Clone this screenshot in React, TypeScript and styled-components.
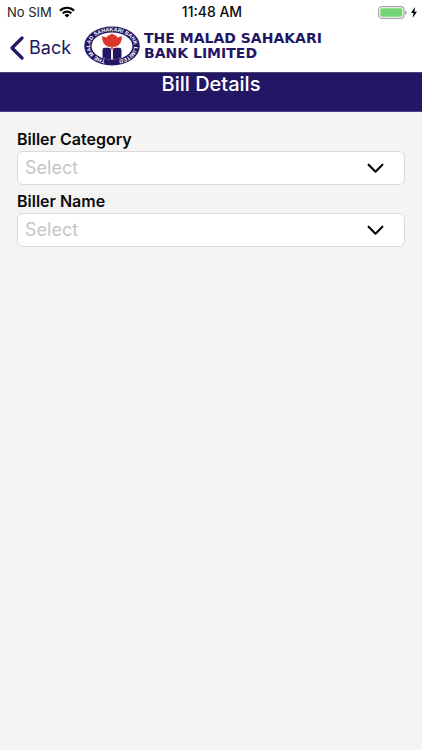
import React, { useId, useState } from "react";
import styled, { createGlobalStyle } from "styled-components";

const navy = "#231765";

const GlobalStyle = createGlobalStyle`
  * { box-sizing: border-box; }
  body {
    margin: 0;
    background: #f4f4f4;
    color: #0b0b0b;
    font-family: Inter, "Liberation Sans", sans-serif;
  }
`;

const Page = styled.div`
  min-height: 100vh;
  background: #f4f4f4;
`;

const Top = styled.header`
  background: #ffffff;
`;

const StatusBar = styled.div`
  display: grid;
  grid-template-columns: 1fr auto 1fr;
  align-items: center;
  height: 24px;
  padding: 0 5px 0 7px;
  font-size: 13px;
  line-height: 24px;
`;

const Carrier = styled.div`
  display: flex;
  align-items: center;
  gap: 7px;
  color: #222222;
`;

const Clock = styled.time`
  font-size: 14px;
  font-weight: 500;
`;

const Power = styled.div`
  display: flex;
  align-items: center;
  justify-content: flex-end;
  gap: 4px;
`;

const NavBar = styled.nav`
  display: flex;
  align-items: center;
  height: 48px;
  padding: 0 9px;
`;

const BackButton = styled.button`
  display: flex;
  align-items: center;
  gap: 5px;
  padding: 0;
  border: 0;
  background: none;
  color: ${navy};
  font: inherit;
  font-size: 18px;
  line-height: 24px;
  cursor: pointer;
`;

const Brand = styled.div`
  display: flex;
  align-items: center;
  gap: 4px;
  margin-left: 13px;
  padding-bottom: 4px;
`;

const Wordmark = styled.div`
  color: ${navy};
  font-family: "DejaVu Sans", sans-serif;
  font-size: 14px;
  font-weight: 700;
  line-height: 15px;
  white-space: nowrap;
`;

const TitleBand = styled.div`
  height: 40px;
  border-top: 1px solid #4a4672;
  border-bottom: 1px solid #4a4384;
  background: ${navy};
`;

const Title = styled.h1`
  margin: 0;
  color: #ffffff;
  font-size: 20px;
  font-weight: 500;
  line-height: 22px;
  text-align: center;
`;

const Form = styled.form`
  display: flex;
  flex-direction: column;
  gap: 6px;
  padding: 17px 17px 0;
`;

const Field = styled.div`
  display: flex;
  flex-direction: column;
`;

const Label = styled.label`
  padding-bottom: 2px;
  font-size: 16px;
  font-weight: 600;
  line-height: 20px;
`;

const SelectBox = styled.div`
  display: grid;
  align-items: center;

  > * { grid-area: 1 / 1; }
  > svg {
    justify-self: end;
    margin-right: 21px;
    pointer-events: none;
  }
`;

const Select = styled.select`
  appearance: none;
  width: 100%;
  height: 34px;
  padding: 0 44px 2px 7px;
  border: 1px solid #dadada;
  border-radius: 6px;
  background: #ffffff;
  color: #c5c5c9;
  font: inherit;
  font-size: 18px;
`;

function WifiIcon() {
  return (
    <svg width="16" height="12" viewBox="0 0 16 12" aria-hidden="true">
      <g fill="none" stroke="#000" strokeWidth="2.2">
        <path d="M1 4.6a10 10 0 0 1 14 0" />
        <path d="M3.7 7.4a6.2 6.2 0 0 1 8.6 0" />
      </g>
      <path d="M8 11.6 5.6 9.2a3.4 3.4 0 0 1 4.8 0z" />
    </svg>
  );
}

function BatteryIcon() {
  return (
    <svg width="29" height="13" viewBox="0 0 29 13" aria-hidden="true">
      <rect x=".6" y=".6" width="25.4" height="11.8" rx="3.2" fill="#fff" stroke="#a3a3a3" strokeWidth="1.1" />
      <rect x="2.2" y="2.2" width="22.2" height="8.6" rx="1.6" fill="#73d573" />
      <path d="M27.2 4.4c1.8.5 1.8 3.7 0 4.2z" fill="#8c8c8c" />
    </svg>
  );
}

function BoltIcon() {
  return (
    <svg width="6" height="11" viewBox="0 0 6 11" aria-hidden="true">
      <path d="M4 0 0 6h2.5L1.6 11 6 4.7H3.5z" />
    </svg>
  );
}

function BackIcon() {
  return (
    <svg width="15" height="24" viewBox="0 0 15 24" aria-hidden="true">
      <path d="M13 2 3 12l10 10" fill="none" stroke={navy} strokeWidth="3.2" strokeLinecap="round" strokeLinejoin="round" />
    </svg>
  );
}

function ChevronIcon() {
  return (
    <svg width="17" height="11" viewBox="0 0 17 11" aria-hidden="true">
      <path d="m1.6 1.7 6.9 7 6.9-7" fill="none" stroke="#050505" strokeWidth="2.1" strokeLinecap="round" strokeLinejoin="round" />
    </svg>
  );
}

function BankSeal() {
  const arc = useId();
  return (
    <svg width="56" height="40" viewBox="0 0 56 40" role="img" aria-label="The Malad Sahakari Bank Limited">
      <ellipse cx="28" cy="20" rx="27.8" ry="19.5" fill={navy} />
      <ellipse cx="28" cy="20" rx="20.4" ry="13.5" fill="#fff" />
      <path id={arc} d="M28 34.7A22 14.7 0 0 1 6 20A22 14.7 0 0 1 50 20A22 14.7 0 0 1 28 34.7" fill="none" />
      <text fill="#fff" fontFamily="Liberation Sans, sans-serif" fontWeight="700" fontSize="5.4">
        <textPath href={`#${arc}`} startOffset="50%" textAnchor="middle">
          THE MALAD SAHAKARI BANK LIMITED
        </textPath>
      </text>
      <path d="M18.5 24q0-2.2 2.2-2.2h4q2.4 0 2.4 2.2v9.4q-5-.2-8.6-2zM28.9 24q0-2.2 2.4-2.2h4q2.2 0 2.2 2.2v7.4q-3.5 1.8-8.6 2z" fill={navy} />
      <path d="M18 10.6q2.6-.5 4.2 1.2.8-2 2.8-2.6l3-1.4 3 1.4q2 .6 2.8 2.6 1.6-1.7 4.2-1.2-.2 8-5.6 9.8-1.6.6-3.6.4v2.6h-1.6v-2.6q-2 .2-3.6-.4-5.4-1.8-5.6-9.8z" fill="#dc352b" />
    </svg>
  );
}

function SelectField({ label, name }: { label: string; name: string }) {
  const id = useId();
  const [value, setValue] = useState("");
  return (
    <Field>
      <Label htmlFor={id}>{label}</Label>
      <SelectBox>
        <Select id={id} name={name} value={value} onChange={(e) => setValue(e.target.value)}>
          <option value="">Select</option>
        </Select>
        <ChevronIcon />
      </SelectBox>
    </Field>
  );
}

export default function App() {
  return (
    <Page>
      <GlobalStyle />
      <Top>
        <StatusBar>
          <Carrier>
            <span>No SIM</span>
            <WifiIcon />
          </Carrier>
          <Clock>11:48 AM</Clock>
          <Power>
            <BatteryIcon />
            <BoltIcon />
          </Power>
        </StatusBar>
        <NavBar>
          <BackButton type="button">
            <BackIcon />
            Back
          </BackButton>
          <Brand>
            <BankSeal />
            <Wordmark>
              THE MALAD SAHAKARI
              <br />
              BANK LIMITED
            </Wordmark>
          </Brand>
        </NavBar>
      </Top>
      <TitleBand>
        <Title>Bill Details</Title>
      </TitleBand>
      <main>
        <Form>
          <SelectField label="Biller Category" name="category" />
          <SelectField label="Biller Name" name="biller" />
        </Form>
      </main>
    </Page>
  );
}
